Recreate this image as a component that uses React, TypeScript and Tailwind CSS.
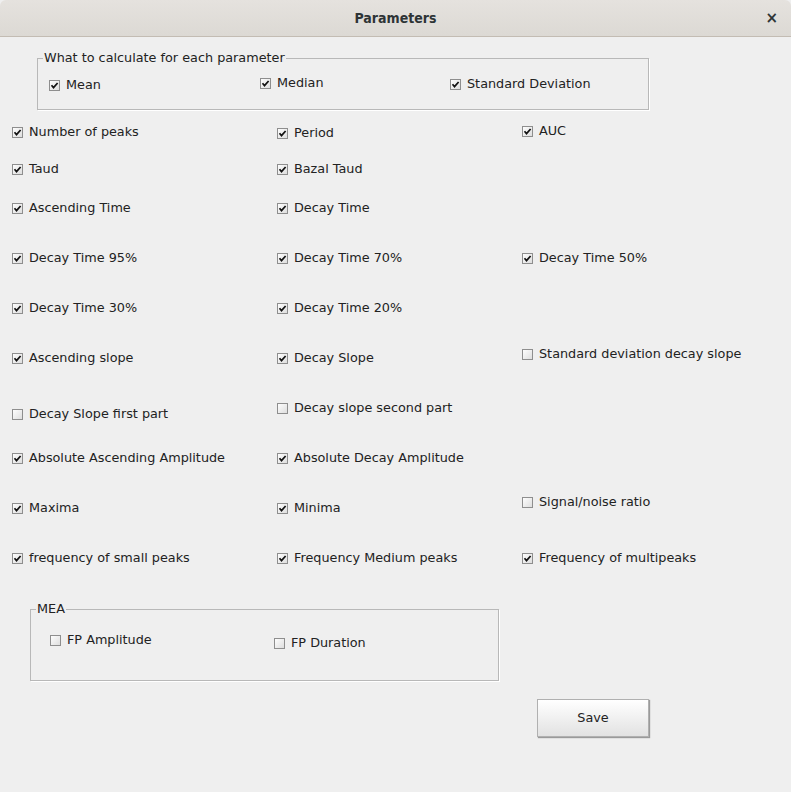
import React from 'react';

type Item = { label: string; checked: boolean; dy: string };

function CheckBox({ checked }: { checked: boolean }) {
  return (
    <svg width="11" height="11" viewBox="0 0 11 11" className="shrink-0">
      <defs>
        <linearGradient id="cbg" x1="0" y1="0" x2="1" y2="1">
          <stop offset="0" stopColor="#ffffff" />
          <stop offset="1" stopColor="#dcdcdc" />
        </linearGradient>
      </defs>
      <rect x="0.5" y="0.5" width="10" height="10" fill="url(#cbg)" stroke="#8e8e8e" />
      {checked && (
        <path d="M2.5 5.3 L4.5 7.6 L8.6 3" fill="none" stroke="#111" strokeWidth="1.7" />
      )}
    </svg>
  );
}

function Check({ label, checked, className = '' }: { label: string; checked: boolean; className?: string }) {
  return (
    <div className={`flex items-center h-[20px] gap-[6px] ${className}`}>
      <CheckBox checked={checked} />
      <span className="whitespace-nowrap">{label}</span>
    </div>
  );
}

const rows: { h: string; items: (Item | null)[] }[] = [
  {
    h: 'h-[37px]',
    items: [
      { label: 'Number of peaks', checked: true, dy: 'mt-0' },
      { label: 'Period', checked: true, dy: 'mt-[1px]' },
      { label: 'AUC', checked: true, dy: '-mt-[1px]' },
    ],
  },
  {
    h: 'h-[39px]',
    items: [
      { label: 'Taud', checked: true, dy: 'mt-0' },
      { label: 'Bazal Taud', checked: true, dy: 'mt-0' },
      null,
    ],
  },
  {
    h: 'h-[50px]',
    items: [
      { label: 'Ascending Time', checked: true, dy: 'mt-0' },
      { label: 'Decay Time', checked: true, dy: 'mt-0' },
      null,
    ],
  },
  {
    h: 'h-[50px]',
    items: [
      { label: 'Decay Time 95%', checked: true, dy: 'mt-0' },
      { label: 'Decay Time 70%', checked: true, dy: 'mt-0' },
      { label: 'Decay Time 50%', checked: true, dy: 'mt-0' },
    ],
  },
  {
    h: 'h-[50px]',
    items: [
      { label: 'Decay Time 30%', checked: true, dy: 'mt-0' },
      { label: 'Decay Time 20%', checked: true, dy: 'mt-0' },
      null,
    ],
  },
  {
    h: 'h-[53px]',
    items: [
      { label: 'Ascending slope', checked: true, dy: 'mt-0' },
      { label: 'Decay Slope', checked: true, dy: 'mt-0' },
      { label: 'Standard deviation decay slope', checked: false, dy: '-mt-[4px]' },
    ],
  },
  {
    h: 'h-[47px]',
    items: [
      { label: 'Decay Slope first part', checked: false, dy: 'mt-[3px]' },
      { label: 'Decay slope second part', checked: false, dy: '-mt-[3px]' },
      null,
    ],
  },
  {
    h: 'h-[50px]',
    items: [
      { label: 'Absolute Ascending Amplitude', checked: true, dy: 'mt-0' },
      { label: 'Absolute Decay Amplitude', checked: true, dy: 'mt-0' },
      null,
    ],
  },
  {
    h: 'h-[50px]',
    items: [
      { label: 'Maxima', checked: true, dy: 'mt-0' },
      { label: 'Minima', checked: true, dy: 'mt-0' },
      { label: 'Signal/noise ratio', checked: false, dy: '-mt-[6px]' },
    ],
  },
  {
    h: 'h-[20px]',
    items: [
      { label: 'frequency of small peaks', checked: true, dy: 'mt-0' },
      { label: 'Frequency Medium peaks', checked: true, dy: 'mt-0' },
      { label: 'Frequency of multipeaks', checked: true, dy: 'mt-0' },
    ],
  },
];

function App() {
  return (
    <div className="w-[791px] h-[792px] bg-[#efefef] text-[#222222] text-[12.8px] overflow-hidden font-['DejaVu_Sans',sans-serif]">
      {/* title bar */}
      <div className="h-[37px] bg-gradient-to-b from-[#e5e2de] to-[#dcd9d4] border-b border-[#c3bcb3] rounded-t-[6px] flex items-center relative">
        <div className="flex-1 text-center font-bold text-[14px] text-[#2e3436] font-['DejaVu_Sans_Condensed',sans-serif]">
          Parameters
        </div>
        <div className="absolute right-[13px] top-[9px] text-[#2e3436] font-bold text-[15px] leading-[18px]">×</div>
      </div>

      {/* group box: what to calculate */}
      <fieldset className="ml-[37px] mt-[14px] w-[612px] h-[59px] border border-[#b8b8b8] shadow-[1px_1px_0_#ffffff]">
        <legend className="ml-[5px] px-[1px] leading-[14px] text-[12.8px]">What to calculate for each parameter</legend>
        <div className="flex items-start">
          <Check label="Mean" checked className="ml-[11px] mt-[10px] w-[211px]" />
          <Check label="Median" checked className="mt-[8px] w-[190px]" />
          <Check label="Standard Deviation" checked className="mt-[9px]" />
        </div>
      </fieldset>

      {/* parameters */}
      <div className="mt-[12px] ml-[12px]">
        {rows.map((r, i) => (
          <div key={i} className={`grid grid-cols-[265px_245px_1fr] items-start ${r.h}`}>
            {r.items.map((it, j) =>
              it ? <Check key={j} label={it.label} checked={it.checked} className={it.dy} /> : <div key={j} />
            )}
          </div>
        ))}
      </div>

      {/* MEA group */}
      <fieldset className="ml-[30px] mt-[34px] w-[469px] h-[79px] border border-[#b8b8b8] shadow-[1px_1px_0_#ffffff]">
        <legend className="ml-[5px] px-[1px] leading-[14px] text-[12.8px]">MEA</legend>
        <div className="flex items-start">
          <Check label="FP Amplitude" checked={false} className="ml-[19px] mt-[14px] w-[224px]" />
          <Check label="FP Duration" checked={false} className="mt-[17px]" />
        </div>
      </fieldset>

      <div className="ml-[537px] mt-[18px]">
        <button className="w-[112px] h-[38px] bg-gradient-to-b from-[#ffffff] to-[#e2e2e2] border border-[#b0b0b0] shadow-[1px_1px_1px_#9a9a9a] text-[12.8px] text-[#222222]">
          Save
        </button>
      </div>
    </div>
  );
}

export default App;
